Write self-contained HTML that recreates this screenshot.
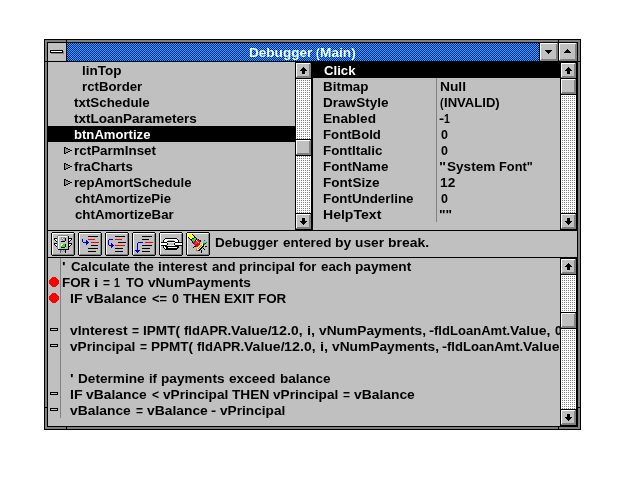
<!DOCTYPE html>
<html lang="en"><head><meta charset="utf-8"><title>Debugger (Main)</title>
<style>
html,body{margin:0;padding:0;background:#fff;}
body{width:640px;height:480px;overflow:hidden;position:relative;}
#chrome{position:absolute;left:0;top:0;}
#txt{position:absolute;left:0;top:0;width:640px;height:480px;will-change:transform;}
.ln{position:absolute;left:0;width:640px;height:16px;font:bold 13.5px 'Liberation Sans', sans-serif;line-height:16px;white-space:pre;color:#000;}
.ln span{position:absolute;top:0;transform-origin:0 0;}
.w{color:#fff;}
.clip{position:absolute;left:0;top:0;width:560px;height:480px;overflow:hidden;}
</style></head>
<body>
<svg id="chrome" width="640" height="480" viewBox="0 0 640 480" shape-rendering="crispEdges">
<defs>
<pattern id="tit" x="67" y="43" width="2" height="2" patternUnits="userSpaceOnUse"><rect width="2" height="2" fill="#0000c0"/><rect x="0" y="0" width="1" height="1" fill="#00c8c8"/><rect x="1" y="1" width="1" height="1" fill="#00c8c8"/></pattern>
<pattern id="trk00" x="0" y="0" width="2" height="2" patternUnits="userSpaceOnUse"><rect width="2" height="2" fill="#fff"/><rect x="0" y="0" width="1" height="1" fill="#808080"/></pattern>
<pattern id="trk10" x="0" y="0" width="2" height="2" patternUnits="userSpaceOnUse"><rect width="2" height="2" fill="#fff"/><rect x="1" y="0" width="1" height="1" fill="#808080"/></pattern>
</defs>
<rect x="44" y="39" width="537" height="391" fill="#000"/>
<rect x="45" y="40" width="535" height="389" fill="#808080"/>
<rect x="47" y="42" width="531" height="385" fill="#000"/>
<rect x="48" y="43" width="529" height="383" fill="#c0c0c0"/>
<rect x="66" y="40" width="1" height="2" fill="#000"/>
<rect x="66" y="427" width="1" height="2" fill="#000"/>
<rect x="558" y="40" width="1" height="2" fill="#000"/>
<rect x="558" y="427" width="1" height="2" fill="#000"/>
<rect x="45" y="61" width="2" height="1" fill="#000"/>
<rect x="578" y="61" width="2" height="1" fill="#000"/>
<rect x="45" y="407" width="2" height="1" fill="#000"/>
<rect x="578" y="407" width="2" height="1" fill="#000"/>
<rect x="48" y="43" width="18" height="18" fill="#c0c0c0"/>
<rect x="66" y="43" width="1" height="18" fill="#000"/>
<rect x="67" y="43" width="472" height="18" fill="url(#tit)"/>
<rect x="539" y="43" width="1" height="18" fill="#000"/>
<rect x="540" y="43" width="18" height="18" fill="#c0c0c0"/>
<rect x="540" y="60" width="18" height="1" fill="#808080"/>
<rect x="557" y="43" width="1" height="18" fill="#808080"/>
<rect x="541" y="59" width="17" height="1" fill="#808080"/>
<rect x="556" y="44" width="1" height="17" fill="#808080"/>
<rect x="540" y="43" width="17" height="1" fill="#fff"/>
<rect x="540" y="43" width="1" height="17" fill="#fff"/>
<rect x="558" y="43" width="1" height="18" fill="#000"/>
<rect x="559" y="43" width="18" height="18" fill="#c0c0c0"/>
<rect x="559" y="60" width="18" height="1" fill="#808080"/>
<rect x="576" y="43" width="1" height="18" fill="#808080"/>
<rect x="560" y="59" width="17" height="1" fill="#808080"/>
<rect x="575" y="44" width="1" height="17" fill="#808080"/>
<rect x="559" y="43" width="17" height="1" fill="#fff"/>
<rect x="559" y="43" width="1" height="17" fill="#fff"/>
<rect x="48" y="61" width="529" height="1" fill="#000"/>
<rect x="51" y="51" width="13" height="3" fill="#808080"/>
<rect x="50" y="50" width="13" height="3" fill="#000"/>
<rect x="51" y="51" width="11" height="1" fill="#fff"/>
<rect x="545" y="50" width="7" height="1" fill="#000"/>
<rect x="546" y="51" width="5" height="1" fill="#000"/>
<rect x="547" y="52" width="3" height="1" fill="#000"/>
<rect x="548" y="53" width="1" height="1" fill="#000"/>
<rect x="567" y="49" width="1" height="1" fill="#000"/>
<rect x="566" y="50" width="3" height="1" fill="#000"/>
<rect x="565" y="51" width="5" height="1" fill="#000"/>
<rect x="564" y="52" width="7" height="1" fill="#000"/>
<rect x="48" y="126" width="247" height="16" fill="#000"/>
<rect x="295" y="62" width="17" height="168" fill="#000"/>
<rect x="296" y="79" width="15" height="134" fill="url(#trk10)"/>
<rect x="296" y="63" width="15" height="15" fill="#c0c0c0"/>
<rect x="296" y="77" width="15" height="1" fill="#808080"/>
<rect x="310" y="63" width="1" height="15" fill="#808080"/>
<rect x="297" y="76" width="14" height="1" fill="#808080"/>
<rect x="309" y="64" width="1" height="14" fill="#808080"/>
<rect x="296" y="63" width="14" height="1" fill="#fff"/>
<rect x="296" y="63" width="1" height="14" fill="#fff"/>
<rect x="303" y="67" width="1" height="1" fill="#000"/>
<rect x="302" y="68" width="3" height="1" fill="#000"/>
<rect x="301" y="69" width="5" height="1" fill="#000"/>
<rect x="300" y="70" width="7" height="1" fill="#000"/>
<rect x="302" y="71" width="3" height="3" fill="#000"/>
<rect x="296" y="214" width="15" height="15" fill="#c0c0c0"/>
<rect x="296" y="228" width="15" height="1" fill="#808080"/>
<rect x="310" y="214" width="1" height="15" fill="#808080"/>
<rect x="297" y="227" width="14" height="1" fill="#808080"/>
<rect x="309" y="215" width="1" height="14" fill="#808080"/>
<rect x="296" y="214" width="14" height="1" fill="#fff"/>
<rect x="296" y="214" width="1" height="14" fill="#fff"/>
<rect x="302" y="218" width="3" height="3" fill="#000"/>
<rect x="300" y="221" width="7" height="1" fill="#000"/>
<rect x="301" y="222" width="5" height="1" fill="#000"/>
<rect x="302" y="223" width="3" height="1" fill="#000"/>
<rect x="303" y="224" width="1" height="1" fill="#000"/>
<rect x="296" y="139" width="15" height="17" fill="#000"/>
<rect x="296" y="140" width="15" height="15" fill="#c0c0c0"/>
<rect x="296" y="154" width="15" height="1" fill="#808080"/>
<rect x="310" y="140" width="1" height="15" fill="#808080"/>
<rect x="297" y="153" width="14" height="1" fill="#808080"/>
<rect x="309" y="141" width="1" height="14" fill="#808080"/>
<rect x="296" y="140" width="14" height="1" fill="#fff"/>
<rect x="296" y="140" width="1" height="14" fill="#fff"/>
<rect x="312" y="62" width="1" height="168" fill="#000"/>
<rect x="313" y="62" width="247" height="16" fill="#000"/>
<rect x="436" y="78" width="1" height="144" fill="#808080"/>
<rect x="560" y="62" width="17" height="168" fill="#000"/>
<rect x="561" y="79" width="15" height="134" fill="url(#trk00)"/>
<rect x="561" y="63" width="15" height="15" fill="#c0c0c0"/>
<rect x="561" y="77" width="15" height="1" fill="#808080"/>
<rect x="575" y="63" width="1" height="15" fill="#808080"/>
<rect x="562" y="76" width="14" height="1" fill="#808080"/>
<rect x="574" y="64" width="1" height="14" fill="#808080"/>
<rect x="561" y="63" width="14" height="1" fill="#fff"/>
<rect x="561" y="63" width="1" height="14" fill="#fff"/>
<rect x="568" y="67" width="1" height="1" fill="#000"/>
<rect x="567" y="68" width="3" height="1" fill="#000"/>
<rect x="566" y="69" width="5" height="1" fill="#000"/>
<rect x="565" y="70" width="7" height="1" fill="#000"/>
<rect x="567" y="71" width="3" height="3" fill="#000"/>
<rect x="561" y="214" width="15" height="15" fill="#c0c0c0"/>
<rect x="561" y="228" width="15" height="1" fill="#808080"/>
<rect x="575" y="214" width="1" height="15" fill="#808080"/>
<rect x="562" y="227" width="14" height="1" fill="#808080"/>
<rect x="574" y="215" width="1" height="14" fill="#808080"/>
<rect x="561" y="214" width="14" height="1" fill="#fff"/>
<rect x="561" y="214" width="1" height="14" fill="#fff"/>
<rect x="567" y="218" width="3" height="3" fill="#000"/>
<rect x="565" y="221" width="7" height="1" fill="#000"/>
<rect x="566" y="222" width="5" height="1" fill="#000"/>
<rect x="567" y="223" width="3" height="1" fill="#000"/>
<rect x="568" y="224" width="1" height="1" fill="#000"/>
<rect x="561" y="78" width="15" height="17" fill="#000"/>
<rect x="561" y="79" width="15" height="15" fill="#c0c0c0"/>
<rect x="561" y="93" width="15" height="1" fill="#808080"/>
<rect x="575" y="79" width="1" height="15" fill="#808080"/>
<rect x="562" y="92" width="14" height="1" fill="#808080"/>
<rect x="574" y="80" width="1" height="14" fill="#808080"/>
<rect x="561" y="79" width="14" height="1" fill="#fff"/>
<rect x="561" y="79" width="1" height="14" fill="#fff"/>
<rect x="48" y="230" width="529" height="1" fill="#000"/>
<rect x="64" y="147" width="1" height="7" fill="#000"/>
<rect x="65" y="147" width="1" height="1" fill="#000"/>
<rect x="65" y="153" width="1" height="1" fill="#000"/>
<rect x="66" y="148" width="2" height="1" fill="#000"/>
<rect x="68" y="149" width="2" height="1" fill="#000"/>
<rect x="70" y="150" width="2" height="1" fill="#000"/>
<rect x="68" y="151" width="2" height="1" fill="#000"/>
<rect x="66" y="152" width="2" height="1" fill="#000"/>
<rect x="65" y="148" width="1" height="5" fill="#909090"/>
<rect x="66" y="149" width="2" height="3" fill="#909090"/>
<rect x="68" y="150" width="2" height="1" fill="#a8a8a8"/>
<rect x="64" y="163" width="1" height="7" fill="#000"/>
<rect x="65" y="163" width="1" height="1" fill="#000"/>
<rect x="65" y="169" width="1" height="1" fill="#000"/>
<rect x="66" y="164" width="2" height="1" fill="#000"/>
<rect x="68" y="165" width="2" height="1" fill="#000"/>
<rect x="70" y="166" width="2" height="1" fill="#000"/>
<rect x="68" y="167" width="2" height="1" fill="#000"/>
<rect x="66" y="168" width="2" height="1" fill="#000"/>
<rect x="65" y="164" width="1" height="5" fill="#909090"/>
<rect x="66" y="165" width="2" height="3" fill="#909090"/>
<rect x="68" y="166" width="2" height="1" fill="#a8a8a8"/>
<rect x="64" y="179" width="1" height="7" fill="#000"/>
<rect x="65" y="179" width="1" height="1" fill="#000"/>
<rect x="65" y="185" width="1" height="1" fill="#000"/>
<rect x="66" y="180" width="2" height="1" fill="#000"/>
<rect x="68" y="181" width="2" height="1" fill="#000"/>
<rect x="70" y="182" width="2" height="1" fill="#000"/>
<rect x="68" y="183" width="2" height="1" fill="#000"/>
<rect x="66" y="184" width="2" height="1" fill="#000"/>
<rect x="65" y="180" width="1" height="5" fill="#909090"/>
<rect x="66" y="181" width="2" height="3" fill="#909090"/>
<rect x="68" y="182" width="2" height="1" fill="#a8a8a8"/>
<rect x="52" y="232" width="22" height="24" fill="#000"/>
<rect x="51" y="233" width="24" height="22" fill="#000"/>
<rect x="52" y="233" width="22" height="22" fill="#c0c0c0"/>
<rect x="52" y="233" width="21" height="1" fill="#fff"/>
<rect x="52" y="233" width="1" height="21" fill="#fff"/>
<rect x="53" y="254" width="21" height="1" fill="#808080"/>
<rect x="73" y="234" width="1" height="21" fill="#808080"/>
<rect x="79" y="232" width="22" height="24" fill="#000"/>
<rect x="78" y="233" width="24" height="22" fill="#000"/>
<rect x="79" y="233" width="22" height="22" fill="#c0c0c0"/>
<rect x="79" y="233" width="21" height="1" fill="#fff"/>
<rect x="79" y="233" width="1" height="21" fill="#fff"/>
<rect x="80" y="254" width="21" height="1" fill="#808080"/>
<rect x="100" y="234" width="1" height="21" fill="#808080"/>
<rect x="106" y="232" width="22" height="24" fill="#000"/>
<rect x="105" y="233" width="24" height="22" fill="#000"/>
<rect x="106" y="233" width="22" height="22" fill="#c0c0c0"/>
<rect x="106" y="233" width="21" height="1" fill="#fff"/>
<rect x="106" y="233" width="1" height="21" fill="#fff"/>
<rect x="107" y="254" width="21" height="1" fill="#808080"/>
<rect x="127" y="234" width="1" height="21" fill="#808080"/>
<rect x="133" y="232" width="22" height="24" fill="#000"/>
<rect x="132" y="233" width="24" height="22" fill="#000"/>
<rect x="133" y="233" width="22" height="22" fill="#c0c0c0"/>
<rect x="133" y="233" width="21" height="1" fill="#fff"/>
<rect x="133" y="233" width="1" height="21" fill="#fff"/>
<rect x="134" y="254" width="21" height="1" fill="#808080"/>
<rect x="154" y="234" width="1" height="21" fill="#808080"/>
<rect x="160" y="232" width="22" height="24" fill="#000"/>
<rect x="159" y="233" width="24" height="22" fill="#000"/>
<rect x="160" y="233" width="22" height="22" fill="#c0c0c0"/>
<rect x="160" y="233" width="21" height="1" fill="#fff"/>
<rect x="160" y="233" width="1" height="21" fill="#fff"/>
<rect x="161" y="254" width="21" height="1" fill="#808080"/>
<rect x="181" y="234" width="1" height="21" fill="#808080"/>
<rect x="187" y="232" width="22" height="24" fill="#000"/>
<rect x="186" y="233" width="24" height="22" fill="#000"/>
<rect x="187" y="233" width="22" height="22" fill="#c0c0c0"/>
<rect x="187" y="233" width="21" height="1" fill="#fff"/>
<rect x="187" y="233" width="1" height="21" fill="#fff"/>
<rect x="188" y="254" width="21" height="1" fill="#808080"/>
<rect x="208" y="234" width="1" height="21" fill="#808080"/>
<rect x="88" y="236" width="10" height="1" fill="#000"/>
<rect x="88" y="239" width="7" height="1" fill="#ff0000"/>
<rect x="91" y="242" width="8" height="1" fill="#ff0000"/>
<rect x="91" y="245" width="7" height="1" fill="#000"/>
<rect x="88" y="248" width="10" height="1" fill="#000"/>
<rect x="88" y="251" width="8" height="1" fill="#000"/>
<rect x="82" y="239" width="1" height="3" fill="#0000c0"/>
<rect x="83" y="242" width="6" height="1" fill="#0000c0"/>
<rect x="86" y="240" width="1" height="5" fill="#0000c0"/>
<rect x="87" y="241" width="1" height="3" fill="#0000c0"/>
<rect x="115" y="236" width="10" height="1" fill="#000"/>
<rect x="115" y="239" width="7" height="1" fill="#ff0000"/>
<rect x="118" y="242" width="8" height="1" fill="#000"/>
<rect x="115" y="245" width="10" height="1" fill="#ff0000"/>
<rect x="115" y="248" width="8" height="1" fill="#000"/>
<rect x="115" y="251" width="8" height="1" fill="#000"/>
<rect x="109" y="239" width="4" height="1" fill="#0000c0"/>
<rect x="108" y="240" width="1" height="5" fill="#0000c0"/>
<rect x="109" y="245" width="5" height="1" fill="#0000c0"/>
<rect x="111" y="243" width="1" height="5" fill="#0000c0"/>
<rect x="112" y="244" width="1" height="3" fill="#0000c0"/>
<rect x="142" y="236" width="10" height="1" fill="#000"/>
<rect x="142" y="239" width="7" height="1" fill="#000"/>
<rect x="145" y="242" width="8" height="1" fill="#ff0000"/>
<rect x="142" y="245" width="10" height="1" fill="#000"/>
<rect x="142" y="248" width="8" height="1" fill="#000"/>
<rect x="142" y="251" width="8" height="1" fill="#000"/>
<rect x="138" y="242" width="5" height="1" fill="#0000c0"/>
<rect x="137" y="243" width="1" height="7" fill="#0000c0"/>
<rect x="135" y="250" width="5" height="1" fill="#0000c0"/>
<rect x="136" y="251" width="3" height="1" fill="#0000c0"/>
<rect x="137" y="252" width="1" height="1" fill="#0000c0"/>
<rect x="58" y="235" width="10" height="1" fill="#808080"/>
<rect x="57" y="236" width="1" height="13" fill="#808080"/>
<rect x="58" y="236" width="10" height="13" fill="#c0c0c0"/>
<rect x="58" y="236" width="1" height="13" fill="#fff"/>
<rect x="58" y="236" width="9" height="1" fill="#fff"/>
<rect x="68" y="236" width="1" height="14" fill="#000"/>
<rect x="58" y="249" width="11" height="1" fill="#000"/>
<rect x="61" y="237" width="4" height="4" fill="#a0a0a0"/>
<rect x="62" y="238" width="1" height="1" fill="#e0e0e0"/>
<rect x="63" y="239" width="1" height="1" fill="#e0e0e0"/>
<rect x="61" y="240" width="1" height="1" fill="#e0e0e0"/>
<rect x="61" y="237" width="1" height="1" fill="#808080"/>
<rect x="64" y="237" width="1" height="1" fill="#808080"/>
<rect x="63" y="238" width="1" height="1" fill="#808080"/>
<rect x="62" y="239" width="1" height="1" fill="#808080"/>
<rect x="65" y="238" width="1" height="3" fill="#000"/>
<rect x="61" y="241" width="4" height="1" fill="#000"/>
<rect x="61" y="244" width="4" height="3" fill="#00ff00"/>
<rect x="61" y="244" width="1" height="1" fill="#fff"/>
<rect x="61" y="245" width="1" height="1" fill="#fff"/>
<rect x="62" y="244" width="1" height="1" fill="#fff"/>
<rect x="65" y="244" width="1" height="3" fill="#000"/>
<rect x="61" y="247" width="4" height="1" fill="#000"/>
<rect x="54" y="238" width="3" height="1" fill="#000"/>
<rect x="54" y="239" width="1" height="1" fill="#000"/>
<rect x="55" y="240" width="1" height="1" fill="#000"/>
<rect x="56" y="241" width="1" height="1" fill="#000"/>
<rect x="55" y="239" width="1" height="1" fill="#fff"/>
<rect x="56" y="239" width="1" height="1" fill="#fff"/>
<rect x="56" y="240" width="1" height="1" fill="#fff"/>
<rect x="69" y="238" width="3" height="1" fill="#000"/>
<rect x="71" y="239" width="1" height="1" fill="#000"/>
<rect x="70" y="240" width="1" height="1" fill="#000"/>
<rect x="69" y="241" width="1" height="1" fill="#000"/>
<rect x="69" y="239" width="1" height="1" fill="#fff"/>
<rect x="70" y="239" width="1" height="1" fill="#fff"/>
<rect x="69" y="240" width="1" height="1" fill="#fff"/>
<rect x="54" y="243" width="3" height="1" fill="#000"/>
<rect x="54" y="244" width="1" height="1" fill="#000"/>
<rect x="55" y="245" width="1" height="1" fill="#000"/>
<rect x="56" y="246" width="1" height="1" fill="#000"/>
<rect x="55" y="244" width="1" height="1" fill="#fff"/>
<rect x="56" y="244" width="1" height="1" fill="#fff"/>
<rect x="56" y="245" width="1" height="1" fill="#fff"/>
<rect x="69" y="243" width="3" height="1" fill="#000"/>
<rect x="71" y="244" width="1" height="1" fill="#000"/>
<rect x="70" y="245" width="1" height="1" fill="#000"/>
<rect x="69" y="246" width="1" height="1" fill="#000"/>
<rect x="69" y="244" width="1" height="1" fill="#fff"/>
<rect x="70" y="244" width="1" height="1" fill="#fff"/>
<rect x="69" y="245" width="1" height="1" fill="#fff"/>
<rect x="60" y="250" width="1" height="3" fill="#606060"/>
<rect x="65" y="250" width="1" height="3" fill="#000"/>
<rect x="61" y="250" width="1" height="1" fill="#909090"/>
<rect x="63" y="250" width="1" height="1" fill="#909090"/>
<rect x="62" y="251" width="1" height="1" fill="#909090"/>
<rect x="64" y="251" width="1" height="1" fill="#909090"/>
<rect x="165" y="238" width="12" height="1" fill="#000"/>
<rect x="164" y="239" width="1" height="1" fill="#000"/>
<rect x="177" y="239" width="1" height="1" fill="#000"/>
<rect x="163" y="240" width="1" height="1" fill="#000"/>
<rect x="178" y="240" width="1" height="1" fill="#000"/>
<rect x="163" y="241" width="1" height="1" fill="#000"/>
<rect x="178" y="241" width="1" height="1" fill="#000"/>
<rect x="165" y="239" width="12" height="1" fill="#fff"/>
<rect x="164" y="240" width="14" height="1" fill="#fff"/>
<rect x="164" y="241" width="3" height="1" fill="#fff"/>
<rect x="175" y="241" width="3" height="1" fill="#fff"/>
<rect x="168" y="240" width="6" height="1" fill="#b0b0b0"/>
<rect x="167" y="241" width="8" height="1" fill="#000"/>
<rect x="161" y="242" width="6" height="1" fill="#000"/>
<rect x="175" y="242" width="7" height="1" fill="#000"/>
<rect x="161" y="243" width="6" height="2" fill="#fff"/>
<rect x="175" y="243" width="7" height="2" fill="#fff"/>
<rect x="161" y="245" width="6" height="1" fill="#000"/>
<rect x="175" y="245" width="7" height="1" fill="#000"/>
<rect x="167" y="242" width="8" height="1" fill="#e8e8e8"/>
<rect x="167" y="245" width="8" height="1" fill="#e8e8e8"/>
<rect x="167" y="243" width="1" height="2" fill="#000"/>
<rect x="174" y="243" width="1" height="2" fill="#000"/>
<rect x="168" y="243" width="6" height="2" fill="#c0c0c0"/>
<rect x="163" y="246" width="16" height="2" fill="#000"/>
<rect x="164" y="248" width="14" height="1" fill="#000"/>
<rect x="165" y="249" width="12" height="1" fill="#000"/>
<rect x="164" y="246" width="1" height="1" fill="#fff"/>
<rect x="164" y="247" width="1" height="1" fill="#fff"/>
<rect x="165" y="247" width="1" height="1" fill="#fff"/>
<rect x="165" y="248" width="1" height="1" fill="#fff"/>
<rect x="168" y="247" width="9" height="1" fill="#fff"/>
<rect x="188" y="234" width="4" height="1" fill="#ffff00"/>
<rect x="192" y="234" width="1" height="1" fill="#000"/>
<rect x="188" y="235" width="5" height="1" fill="#ffff00"/>
<rect x="191" y="235" width="1" height="1" fill="#fff"/>
<rect x="193" y="235" width="1" height="1" fill="#000"/>
<rect x="188" y="236" width="6" height="1" fill="#ffff00"/>
<rect x="192" y="236" width="1" height="1" fill="#fff"/>
<rect x="194" y="236" width="1" height="1" fill="#000"/>
<rect x="188" y="237" width="1" height="1" fill="#000"/>
<rect x="189" y="237" width="5" height="1" fill="#ffff00"/>
<rect x="194" y="237" width="2" height="1" fill="#000"/>
<rect x="189" y="238" width="1" height="1" fill="#000"/>
<rect x="190" y="238" width="2" height="1" fill="#ffff00"/>
<rect x="192" y="238" width="2" height="1" fill="#000"/>
<rect x="194" y="238" width="2" height="1" fill="#00ff00"/>
<rect x="196" y="238" width="1" height="1" fill="#000"/>
<rect x="190" y="239" width="2" height="1" fill="#000"/>
<rect x="192" y="239" width="4" height="1" fill="#00ff00"/>
<rect x="196" y="239" width="1" height="1" fill="#000"/>
<rect x="197" y="239" width="1" height="1" fill="#ff0000"/>
<rect x="198" y="239" width="1" height="1" fill="#000"/>
<rect x="191" y="240" width="1" height="1" fill="#000"/>
<rect x="192" y="240" width="3" height="1" fill="#00ff00"/>
<rect x="195" y="240" width="1" height="1" fill="#000"/>
<rect x="196" y="240" width="1" height="1" fill="#ffff00"/>
<rect x="197" y="240" width="2" height="1" fill="#ff0000"/>
<rect x="199" y="240" width="2" height="1" fill="#000"/>
<rect x="204" y="240" width="1" height="1" fill="#ff0000"/>
<rect x="192" y="241" width="1" height="1" fill="#000"/>
<rect x="193" y="241" width="1" height="1" fill="#00ff00"/>
<rect x="194" y="241" width="2" height="1" fill="#ff0000"/>
<rect x="196" y="241" width="1" height="1" fill="#ff00ff"/>
<rect x="197" y="241" width="1" height="1" fill="#ffff00"/>
<rect x="198" y="241" width="2" height="1" fill="#ff0000"/>
<rect x="200" y="241" width="1" height="1" fill="#000"/>
<rect x="203" y="241" width="2" height="1" fill="#00ffff"/>
<rect x="192" y="242" width="1" height="1" fill="#000"/>
<rect x="193" y="242" width="2" height="1" fill="#ff0000"/>
<rect x="195" y="242" width="3" height="1" fill="#ff00ff"/>
<rect x="198" y="242" width="1" height="1" fill="#ffff00"/>
<rect x="199" y="242" width="1" height="1" fill="#ff0000"/>
<rect x="203" y="242" width="3" height="1" fill="#00ffff"/>
<rect x="206" y="242" width="1" height="1" fill="#ff0000"/>
<rect x="193" y="243" width="1" height="1" fill="#000"/>
<rect x="194" y="243" width="1" height="1" fill="#ff0000"/>
<rect x="195" y="243" width="2" height="1" fill="#ff00ff"/>
<rect x="197" y="243" width="3" height="1" fill="#ff0000"/>
<rect x="202" y="243" width="1" height="1" fill="#e8e8f8"/>
<rect x="203" y="243" width="2" height="1" fill="#00a000"/>
<rect x="205" y="243" width="1" height="1" fill="#000"/>
<rect x="194" y="244" width="6" height="1" fill="#ff0000"/>
<rect x="200" y="244" width="1" height="1" fill="#e8e8f8"/>
<rect x="201" y="244" width="2" height="1" fill="#ffff00"/>
<rect x="203" y="244" width="1" height="1" fill="#000"/>
<rect x="204" y="244" width="1" height="1" fill="#00a000"/>
<rect x="195" y="245" width="4" height="1" fill="#ff0000"/>
<rect x="199" y="245" width="1" height="1" fill="#e8e8f8"/>
<rect x="200" y="245" width="3" height="1" fill="#ffff00"/>
<rect x="201" y="245" width="1" height="1" fill="#808080"/>
<rect x="203" y="245" width="1" height="1" fill="#000"/>
<rect x="194" y="246" width="2" height="1" fill="#000"/>
<rect x="196" y="246" width="2" height="1" fill="#ff0000"/>
<rect x="198" y="246" width="1" height="1" fill="#e8e8f8"/>
<rect x="199" y="246" width="3" height="1" fill="#ffff00"/>
<rect x="200" y="246" width="1" height="1" fill="#808080"/>
<rect x="202" y="246" width="2" height="1" fill="#000"/>
<rect x="205" y="246" width="2" height="1" fill="#000"/>
<rect x="193" y="247" width="1" height="1" fill="#000"/>
<rect x="197" y="247" width="1" height="1" fill="#e8e8f8"/>
<rect x="198" y="247" width="3" height="1" fill="#ffff00"/>
<rect x="199" y="247" width="1" height="1" fill="#808080"/>
<rect x="201" y="247" width="2" height="1" fill="#000"/>
<rect x="197" y="248" width="3" height="1" fill="#ffff00"/>
<rect x="198" y="248" width="1" height="1" fill="#808080"/>
<rect x="200" y="248" width="2" height="1" fill="#000"/>
<rect x="203" y="248" width="1" height="1" fill="#000"/>
<rect x="196" y="249" width="1" height="1" fill="#808080"/>
<rect x="197" y="249" width="2" height="1" fill="#ffff00"/>
<rect x="199" y="249" width="2" height="1" fill="#000"/>
<rect x="204" y="249" width="1" height="1" fill="#000"/>
<rect x="196" y="250" width="2" height="1" fill="#808080"/>
<rect x="198" y="250" width="2" height="1" fill="#000"/>
<rect x="201" y="250" width="1" height="1" fill="#000"/>
<rect x="201" y="251" width="1" height="1" fill="#000"/>
<rect x="201" y="252" width="1" height="1" fill="#000"/>
<rect x="48" y="257" width="529" height="1" fill="#000"/>
<rect x="60" y="258" width="1" height="160" fill="#808080"/>
<rect x="560" y="258" width="17" height="168" fill="#000"/>
<rect x="561" y="275" width="15" height="134" fill="url(#trk00)"/>
<rect x="561" y="259" width="15" height="15" fill="#c0c0c0"/>
<rect x="561" y="273" width="15" height="1" fill="#808080"/>
<rect x="575" y="259" width="1" height="15" fill="#808080"/>
<rect x="562" y="272" width="14" height="1" fill="#808080"/>
<rect x="574" y="260" width="1" height="14" fill="#808080"/>
<rect x="561" y="259" width="14" height="1" fill="#fff"/>
<rect x="561" y="259" width="1" height="14" fill="#fff"/>
<rect x="568" y="263" width="1" height="1" fill="#000"/>
<rect x="567" y="264" width="3" height="1" fill="#000"/>
<rect x="566" y="265" width="5" height="1" fill="#000"/>
<rect x="565" y="266" width="7" height="1" fill="#000"/>
<rect x="567" y="267" width="3" height="3" fill="#000"/>
<rect x="561" y="410" width="15" height="15" fill="#c0c0c0"/>
<rect x="561" y="424" width="15" height="1" fill="#808080"/>
<rect x="575" y="410" width="1" height="15" fill="#808080"/>
<rect x="562" y="423" width="14" height="1" fill="#808080"/>
<rect x="574" y="411" width="1" height="14" fill="#808080"/>
<rect x="561" y="410" width="14" height="1" fill="#fff"/>
<rect x="561" y="410" width="1" height="14" fill="#fff"/>
<rect x="567" y="414" width="3" height="3" fill="#000"/>
<rect x="565" y="417" width="7" height="1" fill="#000"/>
<rect x="566" y="418" width="5" height="1" fill="#000"/>
<rect x="567" y="419" width="3" height="1" fill="#000"/>
<rect x="568" y="420" width="1" height="1" fill="#000"/>
<rect x="561" y="312" width="15" height="17" fill="#000"/>
<rect x="561" y="313" width="15" height="15" fill="#c0c0c0"/>
<rect x="561" y="327" width="15" height="1" fill="#808080"/>
<rect x="575" y="313" width="1" height="15" fill="#808080"/>
<rect x="562" y="326" width="14" height="1" fill="#808080"/>
<rect x="574" y="314" width="1" height="14" fill="#808080"/>
<rect x="561" y="313" width="14" height="1" fill="#fff"/>
<rect x="561" y="313" width="1" height="14" fill="#fff"/>
<rect x="52" y="277" width="4" height="1" fill="#ff0000"/>
<rect x="51" y="278" width="6" height="1" fill="#ff0000"/>
<rect x="50" y="279" width="8" height="1" fill="#ff0000"/>
<rect x="49" y="280" width="10" height="1" fill="#ff0000"/>
<rect x="49" y="281" width="10" height="1" fill="#ff0000"/>
<rect x="49" y="282" width="10" height="1" fill="#ff0000"/>
<rect x="49" y="283" width="10" height="1" fill="#ff0000"/>
<rect x="50" y="284" width="8" height="1" fill="#ff0000"/>
<rect x="51" y="285" width="6" height="1" fill="#ff0000"/>
<rect x="52" y="286" width="4" height="1" fill="#ff0000"/>
<rect x="52" y="293" width="4" height="1" fill="#ff0000"/>
<rect x="51" y="294" width="6" height="1" fill="#ff0000"/>
<rect x="50" y="295" width="8" height="1" fill="#ff0000"/>
<rect x="49" y="296" width="10" height="1" fill="#ff0000"/>
<rect x="49" y="297" width="10" height="1" fill="#ff0000"/>
<rect x="49" y="298" width="10" height="1" fill="#ff0000"/>
<rect x="49" y="299" width="10" height="1" fill="#ff0000"/>
<rect x="50" y="300" width="8" height="1" fill="#ff0000"/>
<rect x="51" y="301" width="6" height="1" fill="#ff0000"/>
<rect x="52" y="302" width="4" height="1" fill="#ff0000"/>
<rect x="50" y="328" width="8" height="3" fill="#000"/>
<rect x="51" y="329" width="6" height="1" fill="#d0d0d0"/>
<rect x="50" y="344" width="8" height="3" fill="#000"/>
<rect x="51" y="345" width="6" height="1" fill="#d0d0d0"/>
<rect x="50" y="392" width="8" height="3" fill="#000"/>
<rect x="51" y="393" width="6" height="1" fill="#d0d0d0"/>
<rect x="50" y="408" width="8" height="3" fill="#000"/>
<rect x="51" y="409" width="6" height="1" fill="#d0d0d0"/>
</svg>
<div id="txt">
<div class="ln w" style="top:45px"><span style="left:249.00px;transform:scaleX(1.004)">Debugger</span> <span style="left:316.40px;transform:scaleX(0.800)">(</span><span style="left:319.99px;transform:scaleX(1.015)">Main)</span></div>
<div class="ln" style="top:63px"><span style="left:82.00px;transform:scaleX(1.000)">linTop</span></div>
<div class="ln" style="top:79px"><span style="left:82.02px;transform:scaleX(0.979)">rctBorder</span></div>
<div class="ln" style="top:95px"><span style="left:73.75px;transform:scaleX(0.990)">txtSchedule</span></div>
<div class="ln" style="top:111px"><span style="left:73.75px;transform:scaleX(1.004)">txtLoanParameters</span></div>
<div class="ln w" style="top:127px"><span style="left:74.03px;transform:scaleX(0.971)">btnAmortize</span></div>
<div class="ln" style="top:143px"><span style="left:74.01px;transform:scaleX(0.994)">rctParmInset</span></div>
<div class="ln" style="top:159px"><span style="left:73.76px;transform:scaleX(0.979)">fraCharts</span></div>
<div class="ln" style="top:175px"><span style="left:74.03px;transform:scaleX(0.973)">repAmortSchedule</span></div>
<div class="ln" style="top:191px"><span style="left:74.51px;transform:scaleX(0.977)">chtAmortizePie</span></div>
<div class="ln" style="top:207px"><span style="left:74.51px;transform:scaleX(0.982)">chtAmortizeBar</span></div>
<div class="ln w" style="top:63px"><span style="left:323.51px;transform:scaleX(0.976)">Click</span></div>
<div class="ln" style="top:79px"><span style="left:323.01px;transform:scaleX(0.994)">Bitmap</span></div>
<div class="ln" style="top:79px"><span style="left:439.98px;transform:scaleX(1.021)">Null</span></div>
<div class="ln" style="top:95px"><span style="left:323.00px;transform:scaleX(1.004)">DrawStyle</span></div>
<div class="ln" style="top:95px"><span style="left:440.40px;transform:scaleX(0.800)">(</span><span style="left:444.03px;transform:scaleX(0.969)">INVALID)</span></div>
<div class="ln" style="top:111px"><span style="left:322.99px;transform:scaleX(1.010)">Enabled</span></div>
<div class="ln" style="top:111px"><span style="left:439.43px;transform:scaleX(1.143)">-</span><span style="left:444.38px;transform:scaleX(0.780)">1</span></div>
<div class="ln" style="top:127px"><span style="left:323.02px;transform:scaleX(0.978)">FontBold</span></div>
<div class="ln" style="top:127px"><span style="left:440.54px;transform:scaleX(0.923)">0</span></div>
<div class="ln" style="top:143px"><span style="left:323.01px;transform:scaleX(0.991)">FontItalic</span></div>
<div class="ln" style="top:143px"><span style="left:440.54px;transform:scaleX(0.923)">0</span></div>
<div class="ln" style="top:159px"><span style="left:323.01px;transform:scaleX(0.992)">FontName</span></div>
<div class="ln" style="top:159px"><span style="left:438.89px;transform:scaleX(1.111)">"</span><span style="left:446.50px;transform:scaleX(1.005)">System</span> <span style="left:499.05px;transform:scaleX(0.948)">Font"</span></div>
<div class="ln" style="top:175px"><span style="left:323.00px;transform:scaleX(1.005)">FontSize</span></div>
<div class="ln" style="top:175px"><span style="left:440.24px;transform:scaleX(1.018)">12</span></div>
<div class="ln" style="top:191px"><span style="left:323.01px;transform:scaleX(0.989)">FontUnderline</span></div>
<div class="ln" style="top:191px"><span style="left:440.54px;transform:scaleX(0.923)">0</span></div>
<div class="ln" style="top:207px"><span style="left:322.96px;transform:scaleX(1.041)">HelpText</span></div>
<div class="ln" style="top:207px"><span style="left:438.98px;transform:scaleX(1.023)">""</span></div>
<div class="ln" style="top:235px"><span style="left:215.00px;transform:scaleX(1.004)">Debugger</span> <span style="left:282.50px;transform:scaleX(0.995)">entered</span> <span style="left:334.97px;transform:scaleX(1.034)">by</span> <span style="left:355.24px;transform:scaleX(1.018)">user</span> <span style="left:387.97px;transform:scaleX(1.033)">break.</span></div>
<div class="clip">
<div class="ln" style="top:259px"><span style="left:62.14px;transform:scaleX(1.143)">'</span> <span style="left:70.51px;transform:scaleX(0.983)">Calculate</span> <span style="left:133.76px;transform:scaleX(0.974)">the</span> <span style="left:157.99px;transform:scaleX(1.011)">interest</span> <span style="left:211.51px;transform:scaleX(0.978)">and</span> <span style="left:239.00px;transform:scaleX(0.995)">principal</span> <span style="left:298.76px;transform:scaleX(0.971)">for</span> <span style="left:320.51px;transform:scaleX(0.983)">each</span> <span style="left:354.99px;transform:scaleX(1.014)">payment</span></div>
<div class="ln" style="top:275px"><span style="left:62.01px;transform:scaleX(0.991)">FOR</span> <span style="left:93.86px;transform:scaleX(1.143)">i</span> <span style="left:102.56px;transform:scaleX(0.889)">=</span> <span style="left:114.38px;transform:scaleX(0.780)">1</span> <span style="left:125.76px;transform:scaleX(0.958)">TO</span> <span style="left:147.75px;transform:scaleX(1.015)">vNumPayments</span></div>
<div class="ln" style="top:291px">  <span style="left:69.95px;transform:scaleX(1.048)">IF</span> <span style="left:85.74px;transform:scaleX(1.026)">vBalance</span> <span style="left:151.53px;transform:scaleX(0.949)">&lt;=</span> <span style="left:171.54px;transform:scaleX(0.923)">0</span> <span style="left:182.75px;transform:scaleX(1.014)">THEN</span> <span style="left:223.99px;transform:scaleX(1.009)">EXIT</span> <span style="left:258.01px;transform:scaleX(0.991)">FOR</span></div>
<div class="ln" style="top:323px">  <span style="left:69.74px;transform:scaleX(1.022)">vInterest</span> <span style="left:131.56px;transform:scaleX(0.889)">=</span> <span style="left:142.99px;transform:scaleX(1.007)">IPMT(</span> <span style="left:183.76px;transform:scaleX(0.968)">fldAPR.</span><span style="left:230.74px;transform:scaleX(1.039)">Value/</span><span style="left:271.21px;transform:scaleX(1.059)">12.</span><span style="left:291.49px;transform:scaleX(1.026)">0,</span> <span style="left:306.91px;transform:scaleX(1.091)">i,</span> <span style="left:318.75px;transform:scaleX(1.019)">vNumPayments,</span> <span style="left:429.43px;transform:scaleX(1.143)">-</span><span style="left:433.76px;transform:scaleX(0.968)">fldLoanAmt.</span><span style="left:509.74px;transform:scaleX(1.033)">Value,</span> <span style="left:554.54px;transform:scaleX(0.923)">0</span></div>
<div class="ln" style="top:339px">  <span style="left:69.75px;transform:scaleX(1.012)">vPrincipal</span> <span style="left:139.56px;transform:scaleX(0.889)">=</span> <span style="left:151.00px;transform:scaleX(1.000)">PPMT(</span> <span style="left:196.76px;transform:scaleX(0.968)">fldAPR.</span><span style="left:243.74px;transform:scaleX(1.039)">Value/</span><span style="left:284.21px;transform:scaleX(1.059)">12.</span><span style="left:304.49px;transform:scaleX(1.026)">0,</span> <span style="left:319.91px;transform:scaleX(1.091)">i,</span> <span style="left:331.75px;transform:scaleX(1.019)">vNumPayments,</span> <span style="left:442.43px;transform:scaleX(1.143)">-</span><span style="left:446.76px;transform:scaleX(0.968)">fldLoanAmt.</span><span style="left:522.74px;transform:scaleX(1.033)">Value,</span></div>
<div class="ln" style="top:371px">  <span style="left:70.14px;transform:scaleX(1.143)">'</span> <span style="left:77.99px;transform:scaleX(1.008)">Determine</span> <span style="left:149.03px;transform:scaleX(0.966)">if</span> <span style="left:160.99px;transform:scaleX(1.008)">payments</span> <span style="left:229.49px;transform:scaleX(1.011)">exceed</span> <span style="left:279.99px;transform:scaleX(1.005)">balance</span></div>
<div class="ln" style="top:387px">  <span style="left:69.95px;transform:scaleX(1.048)">IF</span> <span style="left:85.74px;transform:scaleX(1.026)">vBalance</span> <span style="left:151.56px;transform:scaleX(0.889)">&lt;</span> <span style="left:162.75px;transform:scaleX(1.012)">vPrincipal</span> <span style="left:231.75px;transform:scaleX(1.014)">THEN</span> <span style="left:272.75px;transform:scaleX(1.012)">vPrincipal</span> <span style="left:342.56px;transform:scaleX(0.889)">=</span> <span style="left:353.74px;transform:scaleX(1.026)">vBalance</span></div>
<div class="ln" style="top:403px">  <span style="left:69.74px;transform:scaleX(1.026)">vBalance</span> <span style="left:135.56px;transform:scaleX(0.889)">=</span> <span style="left:146.74px;transform:scaleX(1.026)">vBalance</span> <span style="left:211.43px;transform:scaleX(1.143)">-</span> <span style="left:219.75px;transform:scaleX(1.012)">vPrincipal</span></div>
</div>
</div>
</body></html>
